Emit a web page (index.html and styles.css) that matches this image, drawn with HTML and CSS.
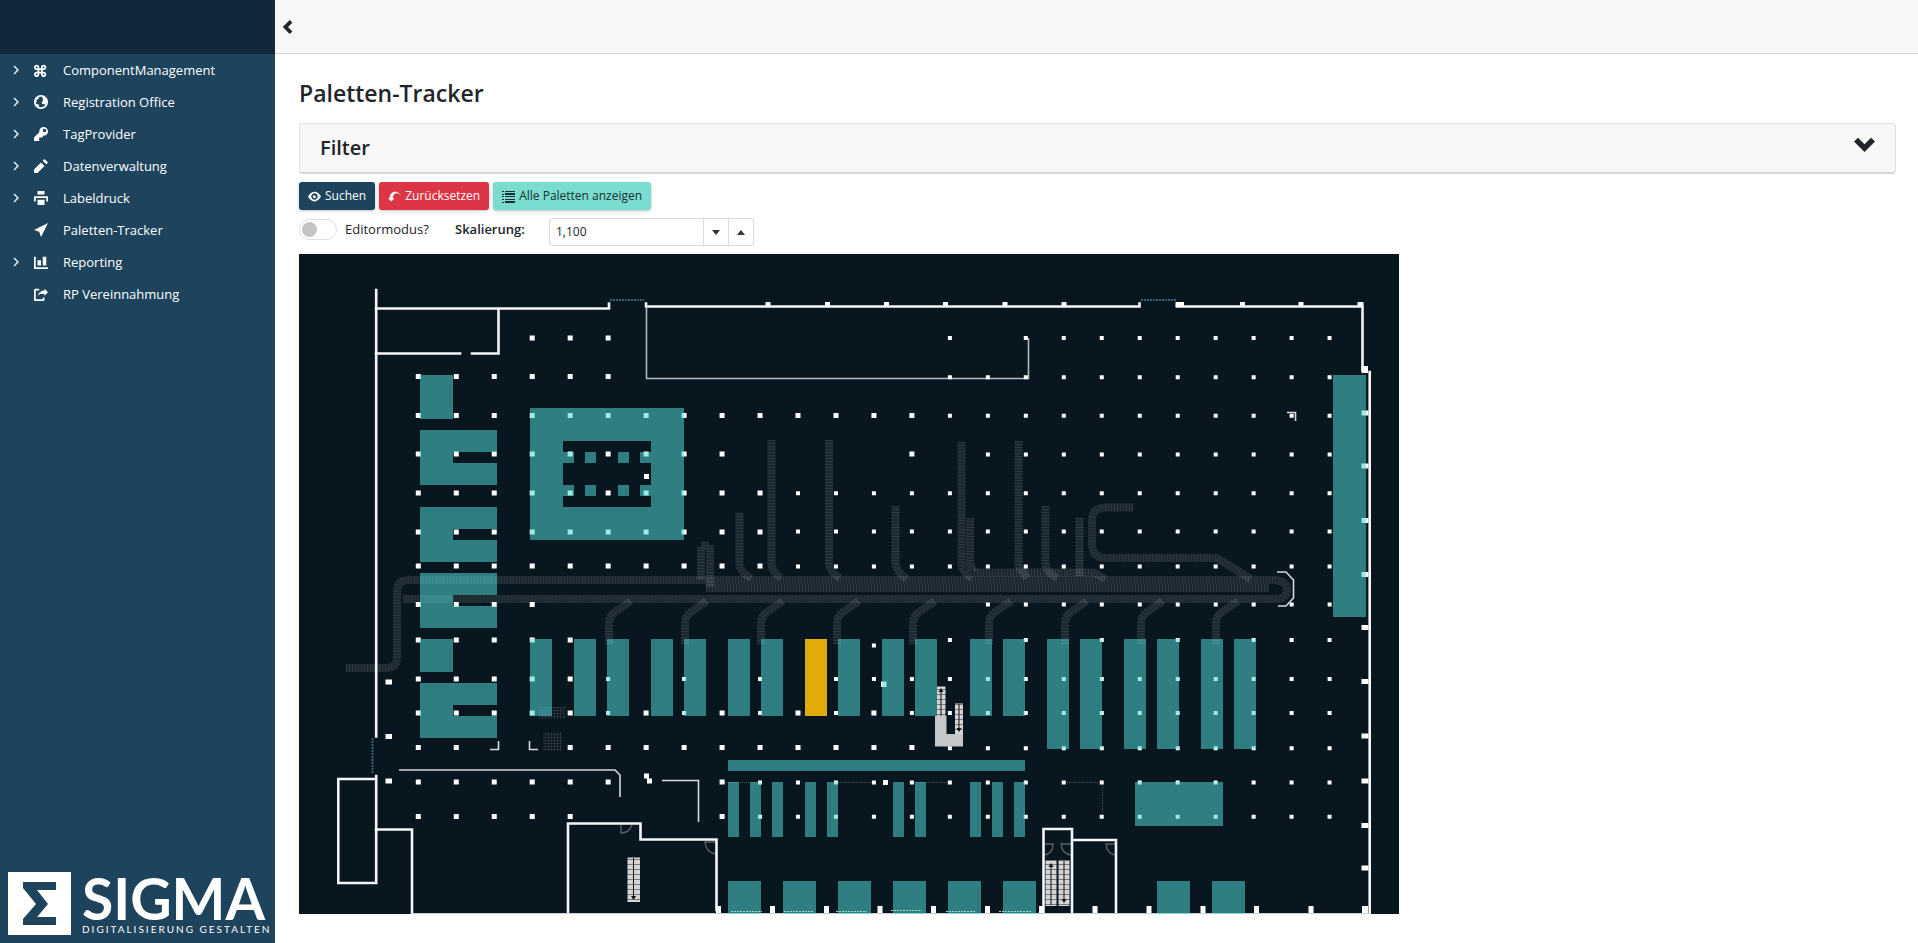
FILE: index.html
```html
<!DOCTYPE html>
<html lang="de">
<head>
<meta charset="utf-8">
<title>Paletten-Tracker</title>
<link rel="stylesheet" href="styles.css">
</head>
<body>
<div class="app">
  <aside class="sidebar">
    <div class="sidebar-top"></div>
    <nav class="nav">
      <a class="nav-item" href="#"><svg class="arrow" viewBox="0 0 8 10"><path d="M2 1l4 4-4 4"/></svg><svg class="icon" viewBox="0 0 8 8"><path transform="translate(0 1)" d="M1.5 0c-.82 0-1.5.68-1.5 1.5s.68 1.5 1.5 1.5h.5v1h-.5c-.82 0-1.5.68-1.5 1.5s.68 1.5 1.5 1.5 1.5-.68 1.5-1.5v-.5h1v.5c0 .82.68 1.5 1.5 1.5s1.5-.68 1.5-1.5-.68-1.5-1.5-1.5h-.5v-1h.5c.82 0 1.5-.68 1.5-1.5s-.68-1.5-1.5-1.5-1.5.68-1.5 1.5v.5h-1v-.5c0-.82-.68-1.5-1.5-1.5zm0 1c.28 0 .5.22.5.5v.5h-.5c-.28 0-.5-.22-.5-.5s.22-.5.5-.5zm4 0c.28 0 .5.22.5.5s-.22.5-.5.5h-.5v-.5c0-.28.22-.5.5-.5zm-2.500 2h1v1h-1v-1zm-1.500 2h.5v.5c0 .28-.22.5-.5.5s-.5-.22-.5-.5.22-.5.5-.5zm3.500 0h.5c.28 0 .5.22.5.5s-.22.5-.5.5-.5-.22-.5-.5v-.5z"/></svg><span>ComponentManagement</span></a>
      <a class="nav-item" href="#"><svg class="arrow" viewBox="0 0 8 10"><path d="M2 1l4 4-4 4"/></svg><svg class="icon" viewBox="0 0 8 8"><path d="M4 0c-2.210 0-4 1.790-4 4s1.790 4 4 4 4-1.790 4-4-1.790-4-4-4zm0 1c.33 0 .64.09.94.19-.21.2-.45.38-.41.56.04.18.69.13.69.5 0 .27-.42.35-.13.66.35.35-.64.98-.66 1.440-.03.83.84.97 1.530.97.42 0 .53.2.5.44-.54.77-1.460 1.250-2.470 1.250-.38 0-.73-.09-1.060-.22.22-.44-.28-1.310-.75-1.590-.23-.23-.72-.14-1-.25-.09-.27-.18-.54-.19-.84.03-.05.08-.09.16-.09.19 0 .45.38.59.34.18-.04-.74-1.310-.31-1.560.2-.12.6.39.47-.16-.12-.51.36-.28.66-.41.26-.11.45-.41.13-.59-.06-.03-.13-.1-.22-.19.45-.27.97-.44 1.530-.44z"/></svg><span>Registration Office</span></a>
      <a class="nav-item" href="#"><svg class="arrow" viewBox="0 0 8 10"><path d="M2 1l4 4-4 4"/></svg><svg class="icon" viewBox="0 0 8 8"><path d="M5.500 0c-1.380 0-2.500 1.120-2.500 2.500 0 .16 0 .32.03.47l-3.030 3.030v2h3v-2h2v-1l.03-.03c.15.03.31.03.47.03 1.380 0 2.500-1.120 2.500-2.500s-1.120-2.500-2.500-2.500zm.5 1c.55 0 1 .45 1 1s-.45 1-1 1-1-.45-1-1 .45-1 1-1z"/></svg><span>TagProvider</span></a>
      <a class="nav-item" href="#"><svg class="arrow" viewBox="0 0 8 10"><path d="M2 1l4 4-4 4"/></svg><svg class="icon" viewBox="0 0 8 8"><path d="M6 0l-1 1 2 2 1-1-2-2zm-2 2l-4 4v2h2l4-4-2-2z"/></svg><span>Datenverwaltung</span></a>
      <a class="nav-item" href="#"><svg class="arrow" viewBox="0 0 8 10"><path d="M2 1l4 4-4 4"/></svg><svg class="icon" viewBox="0 0 8 8"><path d="M2 0v2h4v-2h-4zm-1.910 3c-.06 0-.09.04-.09.09v2.810c0 .05.04.09.09.09h.91v-2h6v2h.91c.05 0 .09-.04.09-.09v-2.810c0-.06-.04-.09-.09-.09h-7.810zm1.910 2v3h4v-3h-4z"/></svg><span>Labeldruck</span></a>
      <a class="nav-item" href="#"><span class="arrow"></span><svg class="icon" viewBox="0 0 8 8"><path d="M8 0l-8 4 3 1 1 3 4-8z"/></svg><span>Paletten-Tracker</span></a>
      <a class="nav-item" href="#"><svg class="arrow" viewBox="0 0 8 10"><path d="M2 1l4 4-4 4"/></svg><svg class="icon" viewBox="0 0 8 8"><path transform="translate(0 1)" d="M0 0v7h8v-1h-7v-6h-1zm5 0v5h2v-5h-2zm-3 2v3h2v-3h-2z"/></svg><span>Reporting</span></a>
      <a class="nav-item" href="#"><span class="arrow"></span><svg class="icon" viewBox="0 0 8 8"><path transform="translate(0 1)" d="M.75 0c-.41 0-.75.34-.75.75v5.500c0 .41.34.75.75.75h4.500c.41 0 .75-.34.75-.75v-1.250h-1v1h-4v-5h2v-1h-2.250zm5.250 0v1c-2.050 0-3.700 1.540-3.940 3.530.21-.88.99-1.530 1.940-1.530h2v1l2-2-2-2z"/></svg><span>RP Vereinnahmung</span></a>
    </nav>
    <div class="brand">
      <svg class="brand-mark" viewBox="0 0 63 63"><path fill="#fff" d="M0 0h63v63H0z"/><path fill="#1d435d" d="M15 10h33v8H29l11 14-11 13h19v8H15v-6l13-15L15 16z"/></svg>
      <div class="brand-text"><div class="brand-name">SIGMA</div><div class="brand-claim">DIGITALISIERUNG GESTALTEN</div></div>
    </div>
  </aside>

  <div class="page">
    <header class="topbar">
      <button class="collapse" type="button" aria-label="Menü einklappen"><svg viewBox="0 0 8 8"><path transform="translate(1 0)" d="M4 0l-4 4 4 4 1.500-1.500-2.500-2.500 2.500-2.500-1.500-1.500z"/></svg></button>
    </header>
    <main class="content">
      <h1>Paletten-Tracker</h1>
      <button class="filter" type="button"><span>Filter</span><svg viewBox="0 0 8 8"><path transform="translate(0 1)" d="M1.500 0l-1.500 1.500 4 4 4-4-1.500-1.500-2.500 2.500-2.500-2.500z"/></svg></button>
      <div class="actions">
        <button class="btn btn-primary" type="button"><svg viewBox="0 0 8 8"><path transform="translate(0 1)" d="M4.030 0c-2.530 0-4.030 3-4.030 3s1.500 3 4.030 3c2.470 0 3.970-3 3.970-3s-1.500-3-3.970-3zm-.03 1c1.110 0 2 .9 2 2 0 1.110-.89 2-2 2-1.100 0-2-.89-2-2 0-1.100.9-2 2-2zm0 1c-.55 0-1 .45-1 1s.45 1 1 1 1-.45 1-1c0-.1-.04-.19-.06-.28-.08.16-.24.28-.44.28-.28 0-.5-.22-.5-.5 0-.2.12-.36.28-.44-.09-.03-.18-.06-.28-.06z"/></svg>Suchen</button>
        <button class="btn btn-danger" type="button"><svg viewBox="0 0 8 8"><path transform="translate(0 1)" d="M4.500 0c-1.930 0-3.500 1.570-3.500 3.500v.5h-1l2 2 2-2h-1v-.5c0-1.390 1.110-2.500 2.500-2.500s2.500 1.110 2.500 2.500c0-1.930-1.570-3.500-3.500-3.500z"/></svg>Zurücksetzen</button>
        <button class="btn btn-info" type="button"><svg viewBox="0 0 13 13"><path d="M0 1h2v1H0zM0 4h2v1H0zM0 6h2v1H0zM0 9h2v1H0zM0 12h2v1H0zM3 1h10v1H3zM3 3h10v2H3zM3 6h10v1H3zM3 9h10v1H3zM3 11h10v2H3z"/></svg>Alle Paletten anzeigen</button>
      </div>
      <div class="settings">
        <label class="switch"><input type="checkbox" role="switch"><span>Editormodus?</span></label>
        <label class="scale-label" for="scale">Skalierung:</label>
        <div class="numeric">
          <input id="scale" type="text" value="1,100" inputmode="decimal">
          <button type="button" aria-label="Verringern"><svg viewBox="0 0 8 5"><path d="M0 0h8L4 5z"/></svg></button>
          <button type="button" aria-label="Erhöhen"><svg viewBox="0 0 8 5"><path d="M0 5h8L4 0z"/></svg></button>
        </div>
      </div>
      <svg class="map" viewBox="0 0 1100 660" role="img" aria-label="Hallenplan">
        <defs>
          <path id="branch" d="M0 390V370Q0 362 6 358L22 347"/>
          <pattern id="steps" width="4" height="5" patternUnits="userSpaceOnUse"><path fill="#d4d4d4" d="M0 0h4v5H0z"/><path fill="#777b7e" d="M0 0h4v1H0z"/></pattern>
          <pattern id="mesh" width="3" height="3" patternUnits="userSpaceOnUse"><path fill="#26313a" d="M0 0h1v3H0zM1 0h2v1H1z"/></pattern>
          <g id="conveyors">
            <path d="M47 414H86Q98 414 98 404V338Q98 326 110 326H976Q988 327 988 336Q988 345 976 345H104"/>
            <path d="M407 334H970"/>
            <path d="M675 318.500H795L806 325"/>
            <path d="M440.500 259V310Q441 318 452 324M472.500 186V310Q473 318 482 324M530 186V310Q531 318 541 324M596.500 252V310Q597 318 608 325M662.500 188V310Q663 318 673 324M671 264V310L674 318M719.500 187V312L728 324M746.500 252V310Q747 318 758 324M780.500 264V322"/>
            <path d="M834 253.500H806Q793 254 793 266V290Q793 304 808 304H918L952 325"/>
            <path d="M411 291V333M402 293V326M406 288V296"/>
            <use href="#branch" x="310"/><use href="#branch" x="386"/><use href="#branch" x="462"/><use href="#branch" x="538"/><use href="#branch" x="614"/><use href="#branch" x="690"/><use href="#branch" x="766"/><use href="#branch" x="842"/><use href="#branch" x="917"/>
          </g>
        </defs>
        <rect width="1100" height="660" fill="#08161f"/>
        <use href="#conveyors" class="belt"/>
        <use href="#conveyors" class="rollers"/>
        <path fill="url(#mesh)" d="M240 453h27v12h-27zM244 478h19v19h-19z"/>

        <path class="wall-glass" d="M311 46H345M842 46H877M73.500 484V520"/>
        <path class="guide" d="M425 528.500H460M539 528.500H575M615 528.500H650M768 528.500H800M803.500 532V560"/>
        <path class="door" d="M322 571V579Q330 579 333 571M417 588H406Q407 599 417 600M745 590H754Q754 600 745 601M772 590H762Q763 600 772 601M816 590H807Q808 600 816 601"/>
        <path class="wall-thin dim" d="M347.500 54V124.500H729.500V84"/>
        <path class="wall-thin" d="M100 516H316L321 521V543M363 526.500H399.500V568M191 495.500H199.500V487M230.500 487V495.500H239M988 158.500H996.500V167M978 318H987L994.500 326V344L987 352H979"/>
        <path class="wall" d="M77.200 36V482.500M77 54.500H310V49.500M199.500 54.500V99.500H173M161 99.500H77M347 49.500V52.500H840.500V49.500M878 52.500H1063.500V116M1070.700 118V660M77.200 522V629H39.300V525H77M77 575.500H113V660M269 660V569.500H341.500V585.500H417.500V656M744.500 660V575H773V660M773 586H817V660"/>
        <path fill="#c9ced1" d="M113 659h958v1H113z"/>
        <path fill="#fff" d="M466.500 48h5v4h-5zM526 48h5v4h-5zM585 48h5v4h-5zM644 48h5v4h-5zM703.500 48h5v4h-5zM762.500 48h5v4h-5zM876.500 48h8.500v5h-8.500zM941 48h5v4h-5zM999.500 48h5v4h-5zM1058.500 48h6v4h-6zM1062.500 112h6.500v7h-6.500z"/>
        <path fill="#fff" d="M1062.500 156.500h7v5h-7zM1062.500 209.500h7v5h-7zM1062.500 264h7v5h-7zM1062.500 318h7v5h-7zM1062.500 371h7v5h-7zM1062.500 425h7v5h-7zM1062.500 479.500h7v5h-7zM1062.500 524.500h7v5h-7zM1062.500 569h7v5h-7zM1062.500 611.500h7v5h-7z"/>
        <path fill="#fff" d="M417 652h5v7h-5zM471 652h5v7h-5zM525 652h5v7h-5zM578.500 652h5v7h-5zM632 652h5v7h-5zM686 652h5v7h-5zM740 652h5v7h-5zM793.500 652h5v7h-5zM847.500 652h5v7h-5zM901.500 652h5v7h-5zM955 652h5v7h-5zM1009.500 652h5v7h-5zM1063 652h6v7h-6z"/>
        <path fill="#fff" d="M86.500 425.500h6.500v5h-6.500zM86.500 480h6.500v5h-6.500zM86.500 524.500h6.500v5h-6.500zM345 519.500h5v5h-5zM348 524.500h5v5h-5zM345 220h5v5h-5zM584 526h5v5h-5zM582 427.500h5.500v5.500h-5.500z"/>

        <path class="pillars" d="M230.700 84H312M116.800 122.500H312M116.800 161.500H616M116.800 200H426M610.400 200H616M116.800 239H464M116.800 278H464M116.800 312H464M116.800 350.500H237M116.800 386H274M116.800 425H274M116.800 459H274M344.600 459H350M420.600 459H426M496.500 459H502M572.400 459H578M116.800 493.500H160M268.700 493.500H616M116.800 528H312M420.600 528H426M116.800 562.500H274M420.600 562.500H426"/>
        <path class="pillars small" d="M648.900 84H653M724.800 84H1033M648.900 123.300H1033M648.900 161.700H1033M686.900 200.500H1033M497 239.300H1033M497 277.500H1033M497 312.500H1033M686.900 350.500H1033M572.900 391.500H577M648.900 386H653M724.800 386H729M800.800 386H805M876.700 386H881M952.600 386H1033M307.200 425H312M383.100 425H388M459 425H464M535 425H1033M307.200 459H312M383.100 459H388M459 459H464M535 459H540M610.900 459H1033M648.900 494.200H1033M459 528.500H1033M459 562.800H1033"/>

        <path class="racks" fill-rule="evenodd" d="M121 121h33v44h-33zM121 176h77v22h-44v11h44v22h-77zM121 253h77v22h-44v11h44v22h-77zM121 319h77v22h-44v11h44v22h-77zM121 385h33v33h-33zM121 429h77v22h-44v11h44v22h-77zM231 154h154v132H231zM264 187v66h88v-66zM264 198h11v11h-11zM286 198h11v11h-11zM319 198h11v11h-11zM341 198h11v11h-11zM264 231h11v11h-11zM286 231h11v11h-11zM319 231h11v11h-11zM341 231h11v11h-11zM1034 121h33v242h-33z
          M231 385h22v77h-22zM275 385h22v77h-22zM308 385h22v77h-22zM352 385h22v77h-22zM385 385h22v77h-22zM429 385h22v77h-22zM462 385h22v77h-22zM539 385h22v77h-22zM583 385h22v77h-22zM616 385h22v77h-22zM671 385h22v77h-22zM704 385h22v77h-22zM748 385h22v110h-22zM781 385h22v110h-22zM825 385h22v110h-22zM858 385h22v110h-22zM902 385h22v110h-22zM935 385h22v110h-22z
          M429 506h297v11H429zM429 528h11v55h-11zM451 528h11v55h-11zM473 528h11v55h-11zM506 528h11v55h-11zM528 528h11v55h-11zM594 528h11v55h-11zM616 528h11v55h-11zM671 528h11v55h-11zM693 528h11v55h-11zM715 528h11v55h-11zM836 528h88v44h-88z
          M429 627h33v33h-33zM484 627h33v33h-33zM539 627h33v33h-33zM594 627h33v33h-33zM649 627h33v33h-33zM704 627h33v33h-33zM858 627h33v33h-33zM913 627h33v33h-33z"/>
        <path fill="#e0ac0b" d="M506 385h22v77h-22z"/>
        <path class="gates" d="M432 657.500H463M485 657.500H515M537 657.500H568M592 656.500H623M647 657.500H677M700 657.500H732"/>

        <path fill="#c6c7c8" d="M636 462h11.500v18H664v12.500h-28z"/>
        <path fill="url(#steps)" d="M638 432.500h8.500V462H638zM656 449.500h8V480h-8zM328.500 603.500h12.500V648h-12.500zM746.500 606.500h11V652h-11zM759.500 606.500h11V652h-11z"/>
        <path fill="none" stroke="#111" d="M642 462V436M660 450V476M334.500 604V644M752 651V611M765 607V647"/>
        <path fill="#111" d="M639.500 438l2.500-4 2.500 4zM657.500 474l2.500 4 2.500-4zM332 642l2.500 4 2.500-4zM749.500 613l2.500-4 2.500 4zM762.500 645l2.500 4 2.500-4z"/>
      </svg>
    </main>
  </div>
</div>
</body>
</html>
```

FILE: styles.css
```css
* { box-sizing: border-box; }

body {
  margin: 0;
  background: #fff;
  color: #212529;
  font-family: "Segoe UI", "Open Sans", "Noto Sans", sans-serif;
  font-size: 13px;
  line-height: 20px;
}

button, input { font: inherit; color: inherit; margin: 0; }

.app { display: flex; min-height: 100vh; }

.sidebar {
  display: flex;
  flex: 0 0 275px;
  flex-direction: column;
  min-width: 0;
  background: #1d435d;
  color: #fff;
}
.sidebar-top { height: 54px; background: #122838; }
.nav { display: flex; flex-direction: column; }
.nav-item {
  display: flex;
  align-items: center;
  height: 32px;
  padding-left: 12px;
  color: #fff;
  text-decoration: none;
}
.arrow { width: 8px; height: 10px; margin-right: 14px; fill: none; stroke: #fff; stroke-width: 1.3; }
.icon { width: 14px; height: 14px; margin-right: 15px; fill: #fff; }

.brand { display: flex; gap: 11px; margin-top: auto; padding: 0 8px 8px; }
.brand-mark { flex: none; width: 63px; height: 63px; }
.brand-text { display: flex; flex-direction: column; justify-content: flex-end; min-width: 0; white-space: nowrap; }
.brand-name { font: 700 57px/50px Lato, sans-serif; }
.brand-claim { font: 10px/12px Lato, sans-serif; letter-spacing: 2px; }

.page { flex: 1; min-width: 0; }
.topbar {
  display: flex;
  align-items: center;
  height: 54px;
  padding-left: 6px;
  border-bottom: 1px solid #d6d5d5;
  background: #f7f7f7;
}
.collapse { display: flex; padding: 0; border: 0; background: none; }
.collapse svg { width: 14px; height: 14px; fill: #212529; }

.content { padding: 24px 22px 24px 24px; }
h1 { margin: 0 0 15px; font-size: 23px; font-weight: 600; line-height: 30px; }

.filter {
  display: flex;
  align-items: center;
  justify-content: space-between;
  width: 100%;
  height: 51px;
  padding: 0 20px;
  border: 1px solid #dfdfdf;
  border-bottom: 2px solid #d6d6d6;
  border-radius: 4px;
  background: #f7f7f7;
  font-size: 20px;
  font-weight: 600;
}
.filter svg { width: 21px; height: 21px; margin-bottom: 6px; fill: #212529; }

.actions { display: flex; gap: 4px; margin: 8px 0; font-size: 12px; }
.btn {
  display: flex;
  align-items: center;
  gap: 4px;
  height: 28px;
  padding: 0 9px;
  border: 0;
  border-radius: 3px;
  box-shadow: 0 1px 3px rgba(0, 0, 0, .25);
}
.btn svg { width: 13px; height: 13px; fill: currentColor; }
.btn-primary { background: #1d435d; color: #fff; }
.btn-danger { background: #dc3545; color: #fff; }
.btn-info { background: #7adccf; color: #16302f; }

.settings { display: flex; align-items: flex-start; margin-bottom: 8px; }
.switch { display: flex; align-items: center; gap: 8px; width: 156px; height: 22px; }
.switch input {
  display: flex;
  align-items: center;
  width: 38px;
  height: 21px;
  padding: 0 2px;
  border: 1px solid #dedede;
  border-radius: 11px;
  background: #fff;
  appearance: none;
}
.switch input::before { width: 15px; height: 15px; border-radius: 50%; background: #c4c4c4; content: ""; }
.scale-label { width: 94px; font-weight: 600; line-height: 22px; }
.numeric { display: flex; width: 205px; height: 28px; border: 1px solid #d9dcde; border-radius: 3px; background: #fff; }
.numeric input { flex: 1; min-width: 0; padding: 0 6px; border: 0; background: none; outline: 0; font-size: 12px; }
.numeric button {
  display: flex;
  align-items: center;
  justify-content: center;
  width: 25px;
  padding: 0;
  border: 0;
  border-left: 1px solid #d9dcde;
  background: none;
}
.numeric svg { width: 8px; height: 5px; fill: #333; }

.map { display: block; width: 1100px; max-width: 100%; height: auto; }
.belt { fill: none; stroke: #fff; stroke-opacity: .08; stroke-width: 8; }
.rollers { fill: none; stroke: #fff; stroke-opacity: .08; stroke-width: 8; stroke-dasharray: 1 2; }
.wall { fill: none; stroke: #f4f6f7; stroke-width: 2.6; stroke-linecap: square; }
.wall-thin { fill: none; stroke: #d5dadd; stroke-width: 1.6; }
.dim { stroke: #b3b9bd; }
.wall-glass { fill: none; stroke: #2e6379; stroke-width: 2; stroke-dasharray: 2 1; }
.guide { fill: none; stroke: #44515a; stroke-dasharray: 1 1; }
.door { fill: none; stroke: #56626a; stroke-width: 1.4; }
.pillars { fill: none; stroke: #fff; stroke-width: 5; stroke-dasharray: 5 32.970; }
.small { stroke-width: 4; stroke-dasharray: 4 33.970; }
.racks { fill: #50d7d3; fill-opacity: .55; }
.gates { fill: none; stroke: #9fd5d3; stroke-dasharray: 2 1; }
```
